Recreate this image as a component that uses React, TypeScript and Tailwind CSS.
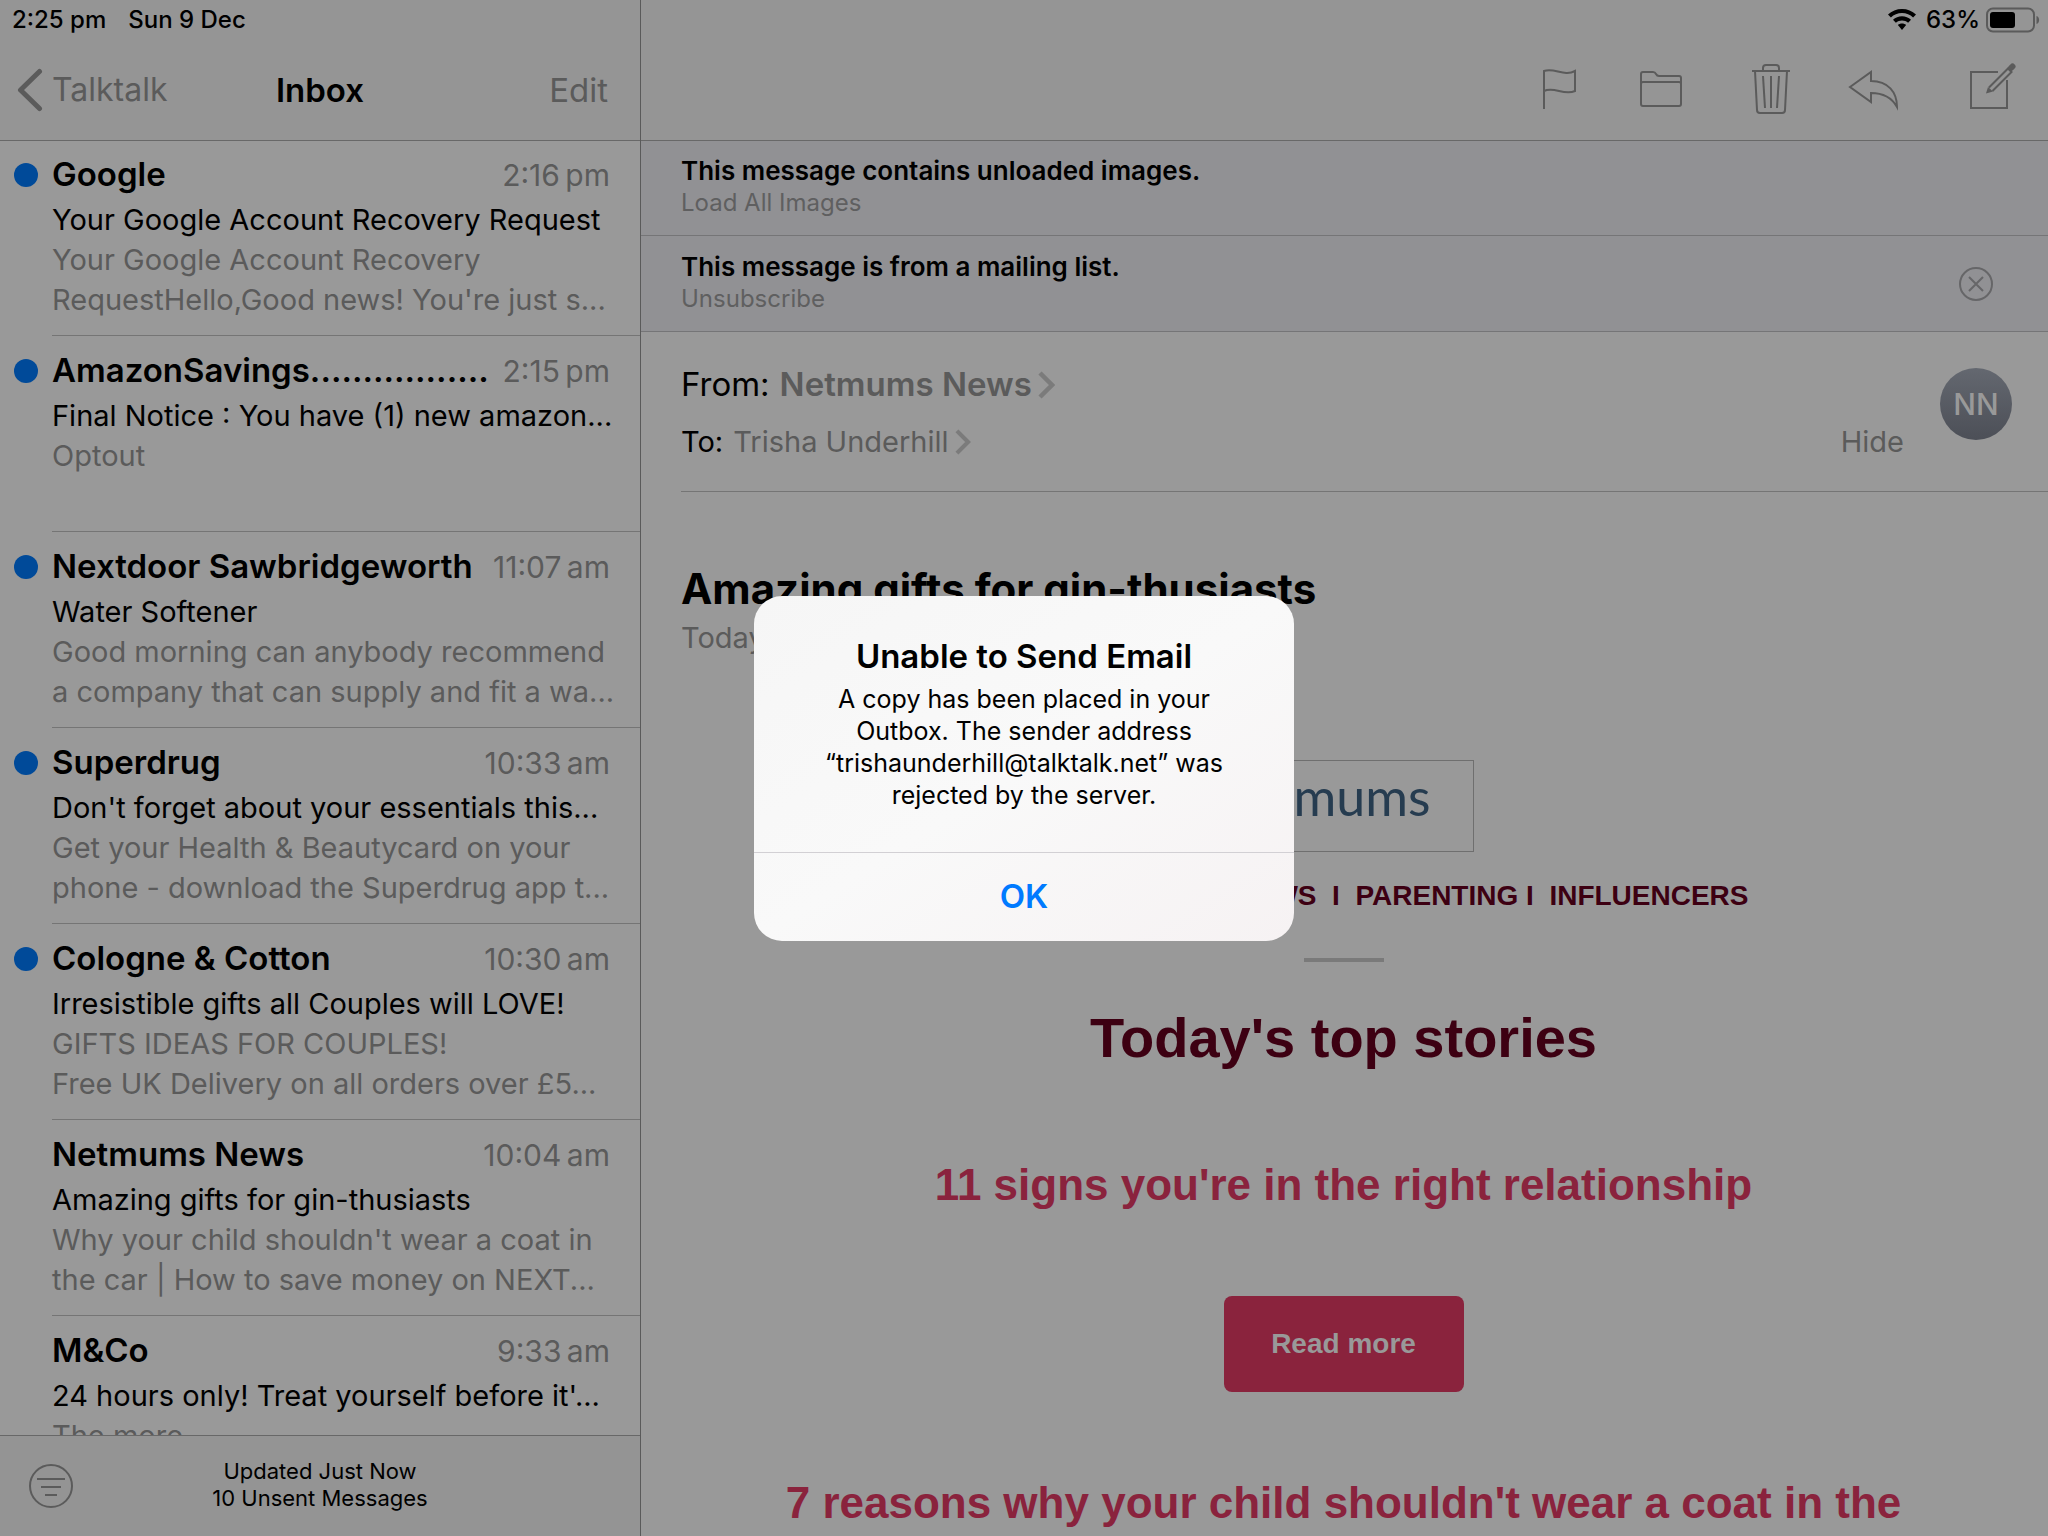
import type { ReactNode } from "react";

type Mail = { from: string; time: string; subject: string; lines: string[]; unread: boolean };

const mails: Mail[] = [
  { from: "Google", time: "2:16\u2009pm", subject: "Your Google Account Recovery Request", lines: ["Your Google Account Recovery", "RequestHello,Good news! You're just s..."], unread: true },
  { from: "AmazonSavings.................", time: "2:15\u2009pm", subject: "Final Notice : You have (1) new amazon...", lines: ["Optout"], unread: true },
  { from: "Nextdoor Sawbridgeworth", time: "11:07\u2009am", subject: "Water Softener", lines: ["Good morning can anybody recommend", "a company that can supply and fit a wa..."], unread: true },
  { from: "Superdrug", time: "10:33\u2009am", subject: "Don't forget about your essentials this...", lines: ["Get your Health & Beautycard on your", "phone - download the Superdrug app t..."], unread: true },
  { from: "Cologne & Cotton", time: "10:30\u2009am", subject: "Irresistible gifts all Couples will LOVE!", lines: ["GIFTS IDEAS FOR COUPLES!", "Free UK Delivery on all orders over £5..."], unread: true },
  { from: "Netmums News", time: "10:04\u2009am", subject: "Amazing gifts for gin-thusiasts", lines: ["Why your child shouldn't wear a coat in", "the car | How to save money on NEXT..."], unread: false },
  { from: "M&Co", time: "9:33\u2009am", subject: "24 hours only! Treat yourself before it'...", lines: ["The more"], unread: false },
];

function ToolButton({ label, children }: { label: string; children: ReactNode }) {
  return (
    <button type="button" aria-label={label} className="shrink-0">
      {children}
    </button>
  );
}

function Chevron({ className }: { className: string }) {
  return (
    <svg viewBox="0 0 17 28" className={className} fill="none" stroke="#7b7b7b" strokeWidth="4.500">
      <path d="M2 2 L14 14 L2 26" />
    </svg>
  );
}

function MailRow({ mail }: { mail: Mail }) {
  return (
    <li className="flex h-[196px] shrink-0">
      <div className="flex w-[52px] shrink-0 pt-[23px] pl-[14px]">
        {mail.unread && <span className="size-6 rounded-full bg-[#004a99]" />}
      </div>
      <a href="#" className="block min-w-0 flex-1 border-b border-[#757575] pt-3 pr-[30px]">
        <div className="flex items-baseline justify-between leading-[44px] whitespace-nowrap">
          <span className="text-[33px] font-semibold">{mail.from}</span>
          <span className="text-[30px] text-[#5b5b5b]">{mail.time}</span>
        </div>
        <div className="mt-[3px] text-[29px] leading-10 whitespace-nowrap">{mail.subject}</div>
        {mail.lines.map((line) => (
          <div key={line} className="text-[29px] leading-10 whitespace-nowrap text-[#5b5b5b]">
            {line}
          </div>
        ))}
      </a>
    </li>
  );
}

function Sidebar() {
  return (
    <aside className="flex w-[641px] shrink-0 flex-col border-r border-[#5a5a5a]">
      <header className="relative z-10 flex h-[141px] shrink-0 flex-col border-b border-[#686868] bg-[#959595]">
        <div className="flex h-10 items-center gap-[22px] pl-3 text-[24px] font-medium">
          <span>2:25 pm</span>
          <span>Sun 9 Dec</span>
        </div>
        <div className="grid h-[100px] grid-cols-3 items-center pr-8 pl-4 text-[33px] leading-10 text-[#5b5b5b]">
          <button type="button" className="flex items-center gap-2 justify-self-start text-[32px]">
            <svg viewBox="0 0 28 44" className="h-11 w-7" fill="none" stroke="#5b5b5b" strokeWidth="5" strokeLinecap="round" strokeLinejoin="round">
              <path d="M23.500 3.500 L4.500 22 L23.500 40.500" />
            </svg>
            Talktalk
          </button>
          <h1 className="pl-4 text-center font-semibold text-black">Inbox</h1>
          <button type="button" className="justify-self-end">Edit</button>
        </div>
      </header>
      <ul className="-mt-px flex min-h-0 flex-1 flex-col overflow-hidden">
        {mails.map((mail) => (
          <MailRow key={mail.from} mail={mail} />
        ))}
      </ul>
      <footer className="grid h-[101px] shrink-0 grid-cols-[100px_1fr_100px] items-center border-t border-[#686868] bg-[#949494]">
        <button type="button" aria-label="Filter" className="ml-7">
          <svg viewBox="0 0 46 46" className="size-[46px]" fill="none" stroke="#5b5b5b" strokeWidth="2">
            <circle cx="23" cy="23" r="21" />
            <path d="M9 16 H37 M13 24 H33 M17 32 H29" />
          </svg>
        </button>
        <p className="pb-[3px] text-center text-[22px] leading-[27px]">
          Updated Just Now
          <br />
          10 Unsent Messages
        </p>
      </footer>
    </aside>
  );
}

function TopBar() {
  return (
    <header className="relative z-10 flex h-[141px] shrink-0 flex-col border-b border-[#686868] bg-[#959595]">
      <div className="flex h-10 items-center justify-end pr-2 text-[24px] font-medium">
        <svg viewBox="0 0 28 22" className="mr-[10px] h-[22px] w-7">
          <path fill="#000" d="M14 0 C8.600 0 3.700 2 0 5.500 L2.900 8.500 C5.800 5.800 9.700 4.100 14 4.100 S22.200 5.800 25.100 8.500 L28 5.500 C24.300 2 19.400 0 14 0 Z M14 7.300 C10.600 7.300 7.400 8.600 5 10.700 L7.900 13.700 C9.500 12.300 11.700 11.400 14 11.400 S18.500 12.300 20.100 13.700 L23 10.700 C20.600 8.600 17.400 7.300 14 7.300 Z M14 14.600 C12.400 14.600 11 15.100 9.900 16.100 L14 21 L18.100 16.100 C17 15.100 15.600 14.600 14 14.600 Z" />
        </svg>
        <span>63%</span>
        <svg viewBox="0 0 54 26" className="ml-[6px] h-[26px] w-[54px]">
          <rect x="1" y="1.500" width="47" height="23" rx="6" fill="none" stroke="#5b5b5b" strokeWidth="2" />
          <rect x="4" y="5" width="25" height="16" rx="3" fill="#000" />
          <path d="M50.500 9 C54 10 54 16 50.500 17 Z" fill="#5b5b5b" />
        </svg>
      </div>
      <div className="flex h-[100px] items-center justify-end gap-[52px] pr-8">
        <ToolButton label="Flag">
          <svg viewBox="0 0 48 60" className="h-[60px] w-12" fill="none" stroke="#5b5b5b" strokeWidth="2">
            <path d="M8 49 V11 C18 7 28 17 39 11 V31 C28 36 18 26 8 31" />
          </svg>
        </ToolButton>
        <ToolButton label="Move to folder">
          <svg viewBox="0 0 52 60" className="h-[60px] w-[52px]" fill="none" stroke="#5b5b5b" strokeWidth="2">
            <path d="M5 24 V14 Q5 12 7 12 H17 Q19 12 20 14 Q21 16 23 16 H43 Q45 16 45 18 V44 Q45 46 43 46 H7 Q5 46 5 44 V24 Q5 22 7 22 H43 Q45 22 45 24" />
          </svg>
        </ToolButton>
        <ToolButton label="Delete">
          <svg viewBox="0 0 56 60" className="h-[60px] w-14" fill="none" stroke="#5b5b5b" strokeWidth="2">
            <path d="M12 11 H50 M23 11 V8 Q23 5 26 5 H36 Q39 5 39 8 V11 M15 11 L17 50 Q17 53 20 53 H42 Q45 53 45 50 L47 11 M23 16 L25 48 M31 16 V48 M39 16 L37 48" />
          </svg>
        </ToolButton>
        <ToolButton label="Reply">
          <svg viewBox="0 0 56 60" className="h-[60px] w-14" fill="none" stroke="#5b5b5b" strokeWidth="2">
            <path d="M2 27 L23 12 V21 C40 21 49 32 49 47 C44 38 36 33 23 33 V42 Z" />
          </svg>
        </ToolButton>
        <ToolButton label="Compose">
          <svg viewBox="0 0 60 60" className="h-[60px] w-[60px]" fill="none" stroke="#5b5b5b" strokeWidth="2">
            <path d="M42 12 H15 V48 H51 V20" />
            <path d="M33 27.500 L52 8.500 L55.500 12 L36.500 31" />
            <path d="M30 33.500 L32 27 L37 31.500 Z" fill="#5b5b5b" stroke="none" />
            <path d="M55 8 L56.500 6.500" strokeWidth="6" strokeLinecap="round" />
          </svg>
        </ToolButton>
      </div>
    </header>
  );
}

function Banner({ title, action, closable }: { title: string; action: string; closable?: boolean }) {
  return (
    <section className="flex h-24 shrink-0 items-center justify-between border-b border-[#757577] bg-[#919194] pr-[54px] pl-10">
      <div className="flex flex-col items-start pb-px">
        <h2 className="text-[26px] leading-8 font-semibold">{title}</h2>
        <button type="button" className="text-[24px] leading-8 text-[#5f5f60]">{action}</button>
      </div>
      {closable && (
        <button type="button" aria-label="Dismiss">
          <svg viewBox="0 0 36 36" className="size-9" fill="none" stroke="#666668" strokeWidth="2">
            <circle cx="18" cy="18" r="16" />
            <path d="M11 11 L25 25 M25 11 L11 25" />
          </svg>
        </button>
      )}
    </section>
  );
}

function Message() {
  return (
    <article className="flex min-h-0 flex-1 flex-col overflow-hidden">
      <div className="ml-10 flex h-40 shrink-0 justify-between border-b border-[#757575] pr-9">
        <div className="pt-[29px]">
          <p className="flex h-12 items-center text-[33px]">
            From:
            <a href="#" className="ml-[10px] flex items-center gap-[6px] font-semibold text-[#5b5b5b]">
              Netmums News <Chevron className="h-7 w-[17px]" />
            </a>
          </p>
          <p className="mt-[9px] flex h-12 items-center text-[29px]">
            To:
            <a href="#" className="ml-[10px] flex items-center gap-[6px] text-[#5b5b5b]">
              Trisha Underhill <Chevron className="h-[26px] w-4" />
            </a>
          </p>
        </div>
        <div className="flex gap-9">
          <button type="button" className="mt-[86px] h-12 text-[29px] text-[#5b5b5b]">Hide</button>
          <span className="mt-9 flex size-[72px] items-center justify-center rounded-full bg-linear-to-b from-[#646870] to-[#4c4f57] text-[30px] font-medium text-[#999999]">
            NN
          </span>
        </div>
      </div>

      <div className="px-10 pt-[71px]">
        <h2 className="text-[42px] leading-[52px] font-bold">Amazing gifts for gin-thusiasts</h2>
        <p className="mt-[5px] text-[29px] leading-[36px] text-[#5b5b5b]">Today</p>
      </div>

      <div className="flex flex-col items-center pt-[104px] pr-[42px] pl-10 font-['Liberation_Sans',Arial,sans-serif] font-bold text-[#8a233d]">
        <div className="flex h-[92px] w-[260px] shrink-0 items-center justify-end border border-[#6f6f6f] pr-[42px] pb-5 font-['Lato',sans-serif] text-[52px] font-normal text-[#263c50]">
          mums
        </div>
        <nav className="mt-7 flex w-[810px] justify-end text-[28px] leading-8 whitespace-pre text-[#3d0012]">
          <a href="#">NEWS</a>
          <span>{"  I  "}</span>
          <a href="#">PARENTING</a>
          <span>{" I  "}</span>
          <a href="#">INFLUENCERS</a>
        </nav>
        <hr className="mt-[46px] h-1 w-20 border-0 bg-[#7a7a7a]" />
        <h2 className="mt-[42px] text-[56px] leading-[68px] text-[#3d0012]">Today's top stories</h2>
        <h3 className="mt-[87px] text-[44px] leading-[52px]">11 signs you're in the right relationship</h3>
        <button type="button" className="mt-[85px] h-24 w-60 shrink-0 rounded-lg bg-[#8a233d] text-[28px] text-[#999999]">
          Read more
        </button>
        <h3 className="mt-[85px] text-[44px] leading-[52px] whitespace-nowrap">7 reasons why your child shouldn't wear a coat in the</h3>
      </div>
    </article>
  );
}

function Alert() {
  return (
    <div className="absolute inset-0 z-20 flex items-center justify-center">
      <div role="alertdialog" aria-labelledby="alert-title" aria-describedby="alert-text" className="w-[540px] overflow-hidden rounded-[28px] bg-linear-to-br from-[#f6f6f6] via-[#f9f9f9] to-[#f6f2f3] text-center">
        <div className="px-14 pt-[38px] pb-[41px]">
          <h2 id="alert-title" className="text-[33px] leading-[44px] font-semibold">Unable to Send Email</h2>
          <p id="alert-text" className="mt-[5px] text-[25px] leading-8">
            A copy has been placed in your Outbox. The sender address “trishaunderhill@talktalk.net” was rejected by the server.
          </p>
        </div>
        <button type="button" className="h-[89px] w-full border-t border-[#d2d0d4] text-[33px] font-semibold text-[#007aff]">
          OK
        </button>
      </div>
    </div>
  );
}

export default function App() {
  return (
    <div className="relative flex h-screen w-full overflow-hidden bg-[#999999] font-['Inter',sans-serif] text-black">
      <Sidebar />
      <main className="flex min-w-0 flex-1 flex-col">
        <TopBar />
        <div className="-mt-px flex min-h-0 flex-1 flex-col">
          <Banner title="This message contains unloaded images." action="Load All Images" />
          <Banner title="This message is from a mailing list." action="Unsubscribe" closable />
          <Message />
        </div>
      </main>
      <Alert />
    </div>
  );
}
